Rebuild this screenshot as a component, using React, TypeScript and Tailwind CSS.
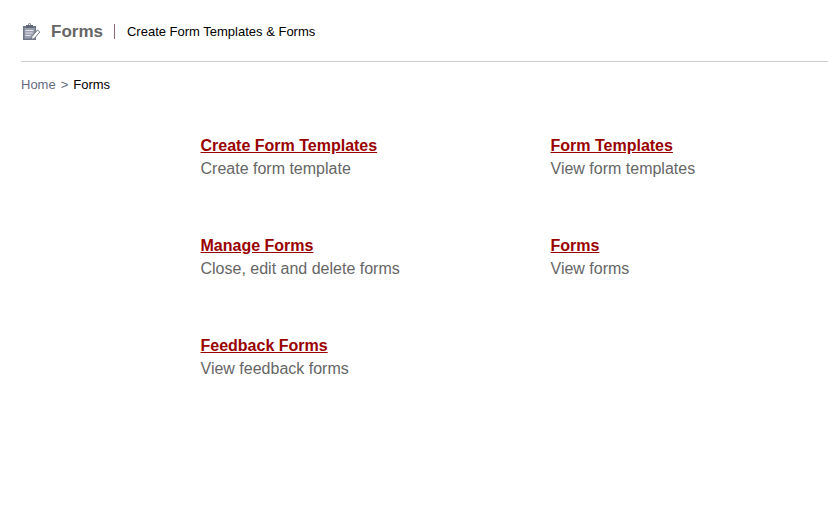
const links = [
  { title: 'Create Form Templates', desc: 'Create form template' },
  { title: 'Form Templates', desc: 'View form templates' },
  { title: 'Manage Forms', desc: 'Close, edit and delete forms' },
  { title: 'Forms', desc: 'View forms' },
  { title: 'Feedback Forms', desc: 'View feedback forms' },
];

function FormsIcon() {
  return (
    <svg width="18" height="18" viewBox="0 0 18 18" className="ml-px shrink-0">
      {/* board */}
      <rect x="1" y="3" width="13" height="14" fill="#6f7686" />
      <rect x="2.5" y="5" width="10" height="10.5" fill="#9aa0ad" />
      {/* clip */}
      <rect x="4" y="2" width="7" height="3" fill="#5f6675" />
      <circle cx="7.5" cy="1.5" r="1" fill="none" stroke="#6f7686" />
      {/* lines */}
      <path d="M3.5 7.5h8M3.5 10h7M3.5 12.500h5" stroke="#e3e5ea" strokeWidth="1" />
      {/* pencil */}
      <path d="M10 13.500l5.500-6.500 2.300 2-5.500 6.500-3 1z" fill="#fff" stroke="#6f7686" strokeWidth="1" />
    </svg>
  );
}

export default function App() {
  return (
    <div className="min-h-[505px] w-[828px] bg-white pl-[21px] font-['Liberation_Sans',Arial,sans-serif]">
      <header className="flex h-[62px] items-center border-b border-[#cccccc] pt-[2px]">
        <FormsIcon />
        <h1 className="ml-[11px] text-[17px] font-bold text-[#666666]">Forms</h1>
        <span className="ml-[11px] h-[15px] w-px bg-[#8a6a70]" />
        <p className="ml-[12px] text-[13px] text-black">Create Form Templates &amp; Forms</p>
      </header>

      <nav className="mt-[15px] flex text-[13px] leading-[16px] text-[#666a80]">
        <a href="#">Home</a>
        <span className="mx-[5px]">&gt;</span>
        <span className="text-black">Forms</span>
      </nav>

      <div className="mt-[41px] ml-[179.5px] grid grid-cols-[350px_1fr] gap-y-[54px]">
        {links.map((l) => (
          <div key={l.title} className="h-[46px]">
            <a href="#" className="block text-[16px] leading-[23px] font-bold text-[#990000] underline">
              {l.title}
            </a>
            <p className="text-[16px] leading-[23px] text-[#666666]">{l.desc}</p>
          </div>
        ))}
      </div>
    </div>
  );
}
